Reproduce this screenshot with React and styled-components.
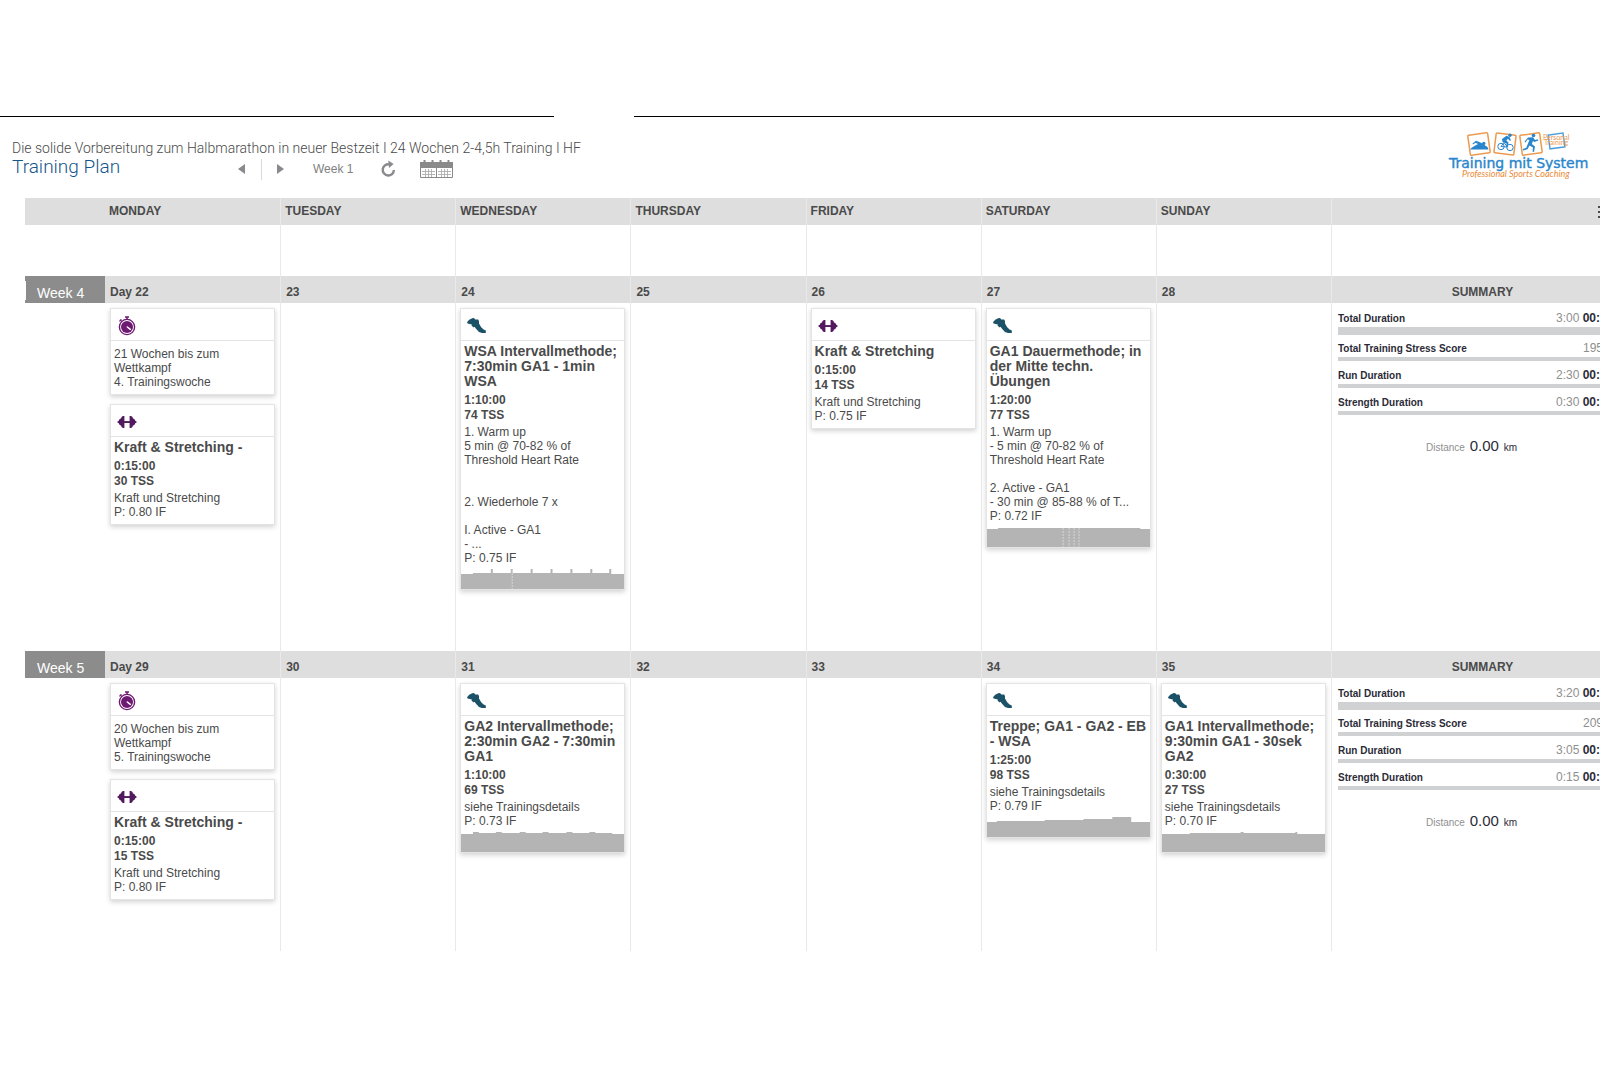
import React from 'react';
import styled, { createGlobalStyle } from 'styled-components';

const GlobalStyle = createGlobalStyle`
    *{
        box-sizing: border-box;
    }
    body{
        margin: 0;
        background-color: white;
        color: #4a4a4a;
        font-family: "Liberation Sans", Arial, sans-serif;
        font-size: 12px;
        overflow-x: hidden;
    }
    button{
        padding: 0;
        border: none;
        background: none;
        cursor: pointer;
        font: inherit;
    }
`

const Page = styled.div`
    width: 100%;
    padding: 116px 0;
    overflow: hidden;
`

const Rule = styled.div`
    display: flex;
    justify-content: space-between;
`
const RulePart = styled.span`
    width: ${props => props.$width};
    height: 1px;
    background-color: #000;
`

const TopBar = styled.header`
    display: flex;
    justify-content: space-between;
    min-height: 81px;
    padding: 10px 10px 0 12px;
`
const PlanInfo = styled.div`
    padding-top: 12px;
`
const PlanName = styled.p`
    margin: 0;
    font-family: Roboto, "Liberation Sans", sans-serif;
    font-size: 14px;
    font-weight: 300;
    line-height: 18px;
    color: #4a4a4a;
`
const PlanRow = styled.div`
    display: flex;
    align-items: flex-start;
`
const PlanTitle = styled.h1`
    width: 226px;
    margin: 0;
    font-family: Roboto, "Liberation Sans", sans-serif;
    font-size: 19px;
    line-height: 20px;
    font-weight: 300;
    color: #14558a;
`
const Toolbar = styled.nav`
    display: flex;
    align-items: center;
    height: 24px;
`
const ToolButton = styled.button`
    display: flex;
    color: #8a8a8e;
`
const Divider = styled.span`
    width: 1px;
    height: 21px;
    margin: 0 15px;
    background-color: #d9d9d9;
`
const CurrentWeek = styled.span`
    width: 68px;
    margin-left: 28px;
    color: #808080;
`
const CalendarButton = styled(ToolButton)`
    margin-left: 24px;
`

/* summary column runs past the right edge of the window */
const Calendar = styled.main`
    margin: 0 -33px 0 25px;
`
const Row = styled.div`
    display: grid;
    grid-template-columns: 80px repeat(7, minmax(0, 1fr)) 302px;
    min-height: ${props => props.$height || '27px'};
    background-color: ${props => props.$band ? '#dedede' : 'transparent'};
`
const Cell = styled.div`
    padding: 5px 5px 5px 4px;
    border-left: 1px solid ${props => props.$first ? 'transparent' : '#e9e9e9'};
`
const DayCell = styled.div`
    height: 27px;
    padding: 0 ${props => props.$low ? '5px' : '4px'};
    border-left: ${props => props.$first ? 'none' : '1px solid #e9e9e9'};
    font-weight: 700;
    line-height: ${props => props.$low ? '32px' : '26px'};
`
const SummaryHead = styled(DayCell)`
    text-align: center;
`
const MenuCell = styled(Cell)`
    display: flex;
    justify-content: flex-end;
    align-items: center;
    padding: 0 17px 0 0;
`
const MenuButton = styled.button`
    display: flex;
    color: #4a4a4a;
`
const WeekLabel = styled.div`
    position: relative;
    height: 27px;
    padding-left: 12px;
    background-color: #8c8c8c;
    color: white;
    font-size: 14px;
    line-height: 34px;
    &::before{
        content: '';
        display: ${props => props.$notch ? 'block' : 'none'};
        position: absolute;
        left: 0;
        top: 5px;
        bottom: 3px;
        width: 1px;
        background-color: white;
    }
`

const Card = styled.article`
    margin-bottom: 9px;
    border: 1px solid #e4e4e4;
    background-color: white;
    box-shadow: 0 2px 5px rgba(0, 0, 0, 0.18);
`
const CardHead = styled.div`
    display: flex;
    height: 32px;
    padding: 7px 6px 0;
    border-bottom: 1px solid #e4e4e4;
`
const CardBody = styled.div`
    padding: ${props => props.$event ? '6px' : '3px'} 0 5px 3px;
`
const CardTitle = styled.h2`
    margin: 0 0 4px;
    font-size: 14px;
    line-height: 15px;
    font-weight: 700;
`
const Stats = styled.div`
    margin-bottom: 2px;
    font-weight: 700;
    line-height: 15px;
`
const Notes = styled.p`
    margin: 0;
    line-height: 14px;
    white-space: pre-line;
`
const Chart = styled.svg`
    display: block;
    width: 100%;
    height: 20px;
    margin-top: -1px;
`

const Summary = styled(Cell)`
    padding: 1px 2px 0 6px;
`
const Metric = styled.div`
    display: flex;
    justify-content: space-between;
    padding: 6px 0 1px;
    border-bottom: ${props => props.$thick ? '8px' : '4px'} solid #d0d1d3;
    margin-bottom: ${props => props.$thick ? '-1px' : '0'};
    line-height: 16px;
`
const MetricName = styled.span`
    height: 16px;
    font-size: 10px;
    line-height: 18px;
    font-weight: 700;
    color: #2b2b38;
`
const MetricValue = styled.span`
    width: ${props => props.$wide ? '75px' : '48px'};
    white-space: nowrap;
`
const Planned = styled.span`
    color: #8f8f8f;
`
const Done = styled.b`
    color: #2b2b38;
`
const Distance = styled.div`
    margin-top: 19px;
    padding-right: 26px;
    text-align: center;
    font-size: 10px;
    line-height: 24px;
    color: #2b2b38;
`
const DistanceValue = styled.span`
    margin: 0 2px;
    font-size: 15px;
`

const Stopwatch = () => (
    <svg width="20" height="20" viewBox="0 0 20 20" fill="none" stroke="#6f1a72">
        <circle cx="10" cy="11" r="7.6" strokeWidth="1.4" />
        <circle cx="10" cy="11" r="6" fill="#6f1a72" stroke="none" />
        <path d="M8 0.9h4M10 1v2.6" strokeWidth="1.5" />
        <path d="M3 3.6l2 2M2.4 5.3l2-2" strokeWidth="1.1" />
        <path d="M10.3 11l3 2.3" stroke="white" strokeWidth="1.5" strokeLinecap="round" />
    </svg>
)

const Dumbbell = () => (
    <svg width="20" height="20" viewBox="0 0 20 20" fill="#52195f">
        <path d="M0 10L2 8.6V7.8L4.4 6V5L6 4H7.4V16H6L4.4 15V14L2 12.2V11.4Z" />
        <path d="M20 10L18 8.6V7.8L15.6 6V5L14 4H12.6V16H14L15.6 15V14L18 12.2V11.4Z" />
        <path d="M6 9.1h8v1.9H6z" />
    </svg>
)

const Shoe = () => (
    <svg width="20" height="20" viewBox="0 0 20 20" fill="#1c5268">
        <path d="M0 6.2L2.2 3.8L5.2 2.2L7 2L8.3 3.6L11.2 3.4L12 5.2V7.4L14.2 11.2L16.6 13.6L18.8 14.6V17H15L12 16L8.8 12.6L7.6 10.8L6.8 11.6L4.6 9.8L4.8 8.6L0.6 7.6Z" />
    </svg>
)

const icons = { event: <Stopwatch />, strength: <Dumbbell />, run: <Shoe /> }

const Triangle = ({ d }) => (
    <svg width="8" height="10" viewBox="0 0 8 10" fill="currentColor"><path d={d} /></svg>
)

const Refresh = () => (
    <svg width="15" height="18" viewBox="0 0 15 18" fill="none">
        <path d="M8.5 4.4A5.6 5.6 0 1 0 12.9 10" stroke="currentColor" strokeWidth="2.4" />
        <path d="M7.3 0.6L12.6 4L8 8Z" fill="currentColor" />
    </svg>
)

const CalendarIcon = () => (
    <svg width="33" height="20" viewBox="0 0 33 20" fill="none" stroke="#8a8a8a">
        <path d="M0 3h33v6H0z" fill="#8a8a8a" stroke="none" />
        <path d="M0.5 8V18.5H32.5V8M16.5 8V19" />
        <path d="M4.5 1v3M12.5 1v3M20.5 1v3M28.5 1v3" strokeWidth="2" />
        <path d="M2 12.5h13M2 15.5h13M18 12.5h13M18 15.5h13M5.5 10v8M8.5 10v8M11.5 10v8M21.5 10v8M24.5 10v8M27.5 10v8" stroke="#b4b4b4" />
    </svg>
)

const Logo = () => (
    <svg width="142" height="54" viewBox="8 2 142 54" fill="none" role="img" aria-label="Training mit System">
        <g stroke="#ec9a50" strokeWidth="1.5">
            <rect x="29" y="9" width="20" height="20" rx="1" transform="rotate(-8 39 19)" />
            <rect x="55" y="9" width="20" height="20" rx="1" transform="rotate(7 65 19)" />
            <rect x="81" y="9" width="20" height="20" rx="1" transform="rotate(-8 91 19)" />
        </g>
        <rect x="109" y="9" width="15" height="14" stroke="#4a9bd8" strokeWidth="1.4" transform="rotate(-8 116 16)" />
        <g fill="#2a86cc">
            <path d="M30 24.5C32 22 35 21 38 19L35.5 17.8L33 19.6L32.5 18.4L36 15.8L41 17.8L47.5 22L48.5 24.5Z" />
            <circle cx="43.8" cy="18.4" r="1.7" />
            <path d="M62 14L66.5 10.8L69.5 12L71 15.5L69.8 15.8L68 13.8L66.3 15.5L68.5 17.5L67.5 22L66 21.8L66.6 18.5L62.5 17Z" />
            <circle cx="70" cy="10.2" r="1.7" />
            <circle cx="93.5" cy="10.5" r="1.8" />
            <path d="M88 12.5L93 12.3L95 15L98 14.3L98.3 15.5L94.5 17L93 16L91.8 19L95 21.5L94 27L92.5 26.6L93 22.5L89.5 20.5L87.5 24.3L83 25.5L82.8 24L86.3 22.8L89.4 15L87.5 14.6L85.6 17.5L84.5 16.8Z" />
        </g>
        <g stroke="#2a86cc" strokeWidth="1">
            <circle cx="61" cy="21.5" r="3.2" />
            <circle cx="70" cy="22.5" r="3.2" />
            <path d="M61 21.5l3-4l3.5 4.6z" />
        </g>
        <g fontFamily="Lato, sans-serif" fontSize="7" fill="#ec9a50">
            <text x="103" y="15">Personal</text>
            <text x="104" y="20">Training</text>
        </g>
        <text x="9" y="43" fontSize="14" fontFamily="DejaVu Sans, sans-serif" fill="#2a86cc" stroke="#2a86cc" strokeWidth="0.4">Training mit System</text>
        <text x="22" y="52" fontSize="9" fontFamily="Lato, sans-serif" fontStyle="italic" fill="#ea8a35">Professional Sports Coaching</text>
    </svg>
)

const days = ['MONDAY', 'TUESDAY', 'WEDNESDAY', 'THURSDAY', 'FRIDAY', 'SATURDAY', 'SUNDAY']

const event = (notes) => ({ type: 'event', notes })
const strength = (title, tss, intensity) => ({
    type: 'strength', title, time: '0:15:00', tss, notes: `Kraft und Stretching\nP: ${intensity} IF`,
})

// chart: outline of the intensity blocks, dots: x of the dashed step marks
const weeks = [
    {
        label: 'Week 4',
        notch: true,
        height: '348px',
        days: ['Day 22', '23', '24', '25', '26', '27', '28'],
        cards: {
            0: [event('21 Wochen bis zum Wettkampf\n4. Trainingswoche'), strength('Kraft & Stretching -', '30', '0.80')],
            2: [{
                type: 'run',
                title: 'WSA Intervallmethode; 7:30min GA1 - 1min WSA',
                time: '1:10:00',
                tss: '74',
                notes: '1. Warm up\n5 min @ 70-82 % of Threshold Heart Rate\n\n\n2. Wiederhole 7 x\n\nI. Active - GA1\n- ...\nP: 0.75 IF',
                chart: 'M0 20V5H12V4H30V0H32V4H50V0H52V4H70V0H72V4H90V0H92V4H110V0H112V4H130V0H132V4H149V0H151V5H164V20Z',
                dots: [51],
            }],
            4: [strength('Kraft & Stretching', '14', '0.75')],
            5: [{
                type: 'run',
                title: 'GA1 Dauermethode; in der Mitte techn. Übungen',
                time: '1:20:00',
                tss: '77',
                notes: '1. Warm up\n- 5 min @ 70-82 % of Threshold Heart Rate\n\n2. Active - GA1\n- 30 min @ 85-88 % of T...\nP: 0.72 IF',
                chart: 'M0 20V2H11V1H154V2H164V20Z',
                dots: [76, 82, 87, 92],
            }],
        },
        summary: [
            ['Total Duration', '3:00', '00:'],
            ['Total Training Stress Score', '195'],
            ['Run Duration', '2:30', '00:'],
            ['Strength Duration', '0:30', '00:'],
        ],
    },
    {
        label: 'Week 5',
        height: '273px',
        days: ['Day 29', '30', '31', '32', '33', '34', '35'],
        cards: {
            0: [event('20 Wochen bis zum Wettkampf\n5. Trainingswoche'), strength('Kraft & Stretching -', '15', '0.80')],
            2: [{
                type: 'run',
                title: 'GA2 Intervallmethode; 2:30min GA2 - 7:30min GA1',
                time: '1:10:00',
                tss: '69',
                notes: 'siehe Trainingsdetails\nP: 0.73 IF',
                chart: 'M0 20V2H12V0H18V1H35V0H41V1H59V0H65V1H82V0H88V1H106V0H112V1H129V0H135V1H152V2H164V20Z',
            }],
            5: [{
                type: 'run',
                title: 'Treppe; GA1 - GA2 - EB - WSA',
                time: '1:25:00',
                tss: '98',
                notes: 'siehe Trainingsdetails\nP: 0.79 IF',
                chart: 'M0 20V5H10V4H58V3H97V2H126V0H145V5H164V20Z',
            }],
            6: [{
                type: 'run',
                title: 'GA1 Intervallmethode; 9:30min GA1 - 30sek GA2',
                time: '0:30:00',
                tss: '27',
                notes: 'siehe Trainingsdetails\nP: 0.70 IF',
                chart: 'M0 20V2H28V1H79V0H82V1H134V0H136V2H164V20Z',
            }],
        },
        summary: [
            ['Total Duration', '3:20', '00:'],
            ['Total Training Stress Score', '209'],
            ['Run Duration', '3:05', '00:'],
            ['Strength Duration', '0:15', '00:'],
        ],
    },
]

const Workout = ({ item }) => (
    <Card>
        <CardHead>{icons[item.type]}</CardHead>
        <CardBody $event={item.type === 'event'}>
            {item.title && <CardTitle>{item.title}</CardTitle>}
            {item.time && <Stats>{item.time}<br />{item.tss} TSS</Stats>}
            <Notes>{item.notes}</Notes>
        </CardBody>
        {item.chart && (
            <Chart viewBox="0 0 164 20" preserveAspectRatio="none">
                <path d={item.chart} fill="#b4b4b4" />
                {(item.dots || []).map(x => (
                    <path key={x} d={`M${x}.5 1V20`} stroke="#d6d6d6" strokeDasharray="2 1" />
                ))}
            </Chart>
        )}
    </Card>
)

const Week = ({ week }) => (
    <section>
        <Row $band>
            <WeekLabel $notch={week.notch}>{week.label}</WeekLabel>
            {week.days.map((day, index) => (
                <DayCell key={day} $first={index === 0} $low>{day}</DayCell>
            ))}
            <SummaryHead $low>SUMMARY</SummaryHead>
        </Row>
        <Row $height={week.height}>
            <div />
            {week.days.map((day, index) => (
                <Cell key={day} $first={index === 0}>
                    {(week.cards[index] || []).map((item, i) => <Workout key={i} item={item} />)}
                </Cell>
            ))}
            <Summary>
                {week.summary.map(([name, planned, done], index) => (
                    <Metric key={name} $thick={index === 0}>
                        <MetricName>{name}</MetricName>
                        <MetricValue $wide={!!done}>
                            <Planned>{planned}</Planned> {done && <Done>{done}</Done>}
                        </MetricValue>
                    </Metric>
                ))}
                <Distance>
                    <Planned>Distance</Planned> <DistanceValue>0.00</DistanceValue> km
                </Distance>
            </Summary>
        </Row>
    </section>
)

const App = () => {
    return (
        <Page>
            <GlobalStyle />
            <Rule>
                <RulePart $width="34.6%" />
                <RulePart $width="60.4%" />
            </Rule>
            <TopBar>
                <PlanInfo>
                    <PlanName>Die solide Vorbereitung zum Halbmarathon in neuer Bestzeit I 24 Wochen 2-4,5h Training I HF</PlanName>
                    <PlanRow>
                        <PlanTitle>Training Plan</PlanTitle>
                        <Toolbar>
                            <ToolButton aria-label="Previous week"><Triangle d="M7 0V10L0 5Z" /></ToolButton>
                            <Divider />
                            <ToolButton aria-label="Next week"><Triangle d="M0 0V10L7 5Z" /></ToolButton>
                            <CurrentWeek>Week 1</CurrentWeek>
                            <ToolButton aria-label="Refresh"><Refresh /></ToolButton>
                            <CalendarButton aria-label="Calendar"><CalendarIcon /></CalendarButton>
                        </Toolbar>
                    </PlanRow>
                </PlanInfo>
                <Logo />
            </TopBar>
            <Calendar>
                <Row $band>
                    <div />
                    {days.map((day, index) => (
                        <DayCell key={day} $first={index === 0}>{day}</DayCell>
                    ))}
                    <MenuCell>
                        <MenuButton aria-label="Menu">
                            <svg width="18" height="12" viewBox="0 0 18 12" fill="currentColor">
                                <path d="M0 0h18v2H0zM0 5h18v2H0zM0 10h18v2H0z" />
                            </svg>
                        </MenuButton>
                    </MenuCell>
                </Row>
                <Row $height="51px">
                    <div />
                    {days.map((day, index) => <Cell key={day} $first={index === 0} />)}
                    <Cell />
                </Row>
                {weeks.map(week => <Week key={week.label} week={week} />)}
            </Calendar>
        </Page>
    );
}

export default App;
